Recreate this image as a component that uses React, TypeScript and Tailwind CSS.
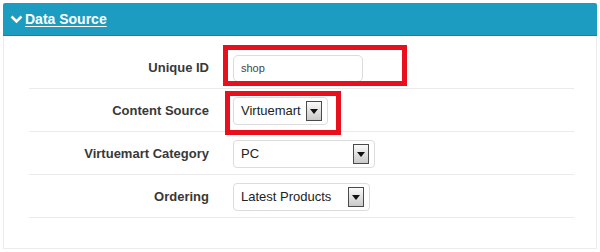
import React from 'react'

type Row = {
  label: string
  kind: 'input' | 'select'
  value: string
  width: string
  mark?: string
}

const ROWS: Row[] = [
  { label: 'Unique ID', kind: 'input', value: 'shop', width: 'w-[130px]', mark: 'left-[-10px] top-[-3px] w-[184px] h-[41px]' },
  { label: 'Content Source', kind: 'select', value: 'Virtuemart', width: 'w-[95px]', mark: 'left-[-8px] top-0 w-[116px] h-[44px]' },
  { label: 'Virtuemart Category', kind: 'select', value: 'PC', width: 'w-[142px]' },
  { label: 'Ordering', kind: 'select', value: 'Latest Products', width: 'w-[137px]' },
]

const DropButton = () => (
  <span className="flex h-[20px] w-[16px] shrink-0 items-center justify-center border border-[#4a4a4a] bg-gradient-to-b from-[#fafafa] to-[#c9c9c9]">
    <svg width="8" height="5" viewBox="0 0 8 5">
      <path d="M0 0 L8 0 L4 5 Z" fill="#111" />
    </svg>
  </span>
)

const App = () => {
  return (
    <div className="h-[252px] w-[600px] bg-white p-[3px] font-['Liberation_Sans',Arial,sans-serif]">
      <div className="flex h-[33px] items-center gap-[2px] rounded-t-[2px] border-b border-[#1682a3] bg-[#1c9cc0] pl-[7px] text-white">
        <svg width="13" height="9" viewBox="0 0 13 9">
          <path d="M1.5 1.5 L6.5 6.5 L11.5 1.5" stroke="#fff" strokeWidth="2.6" fill="none" />
        </svg>
        <span className="text-[14px] font-bold underline underline-offset-2">Data Source</span>
      </div>
      <div className="h-[213px] border-x border-b border-[#ececec] pt-[10px]">
        <div className="ml-[25px] w-[545px]">
          {ROWS.map((row) => (
            <div key={row.label} className="flex h-[43px] items-center border-b border-[#ebebeb] pt-[2px]">
              <div className="w-[180px] text-right text-[13px] font-bold text-[#383838]">{row.label}</div>
              <div className="relative ml-[24px] flex h-full items-center">
                {row.kind === 'input' ? (
                  <div className={`flex h-[27px] ${row.width} items-center rounded-[5px] border border-[#dcdcdc] pl-[7px] text-[11px] text-[#444]`}>
                    {row.value}
                  </div>
                ) : (
                  <div className={`flex h-[28px] ${row.width} items-center justify-between gap-[4px] rounded-[4px] border border-[#dcdcdc] pl-[7px] pr-[5px] text-[13px] text-[#222]`}>
                    <span className="whitespace-nowrap">{row.value}</span>
                    <DropButton />
                  </div>
                )}
                {row.mark && <div className={`absolute border-[5px] border-[#e8101c] ${row.mark}`} />}
              </div>
            </div>
          ))}
        </div>
      </div>
    </div>
  )
}

export default App
